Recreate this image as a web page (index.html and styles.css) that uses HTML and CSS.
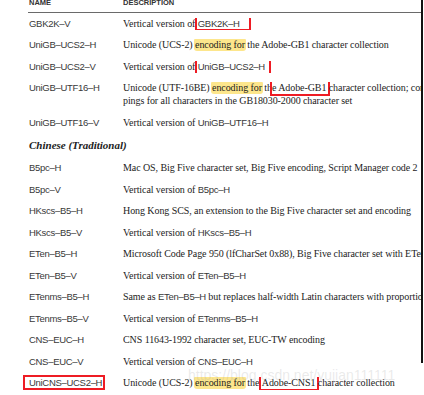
FILE: index.html
```html
<!DOCTYPE html>
<html>
<head>
<meta charset="utf-8">
<link rel="stylesheet" href="styles.css">
</head>
<body>
<div class="page">
  <div class="sheet">
    <div class="head"><span class="h-name">NAME</span><span class="h-desc">DESCRIPTION</span></div>
    <div class="row"><div class="name">GBK2K–V</div><div class="desc">Vertical version of <span class="ref box b1">GBK2K–H</span></div></div>
    <div class="row"><div class="name">UniGB–UCS2–H</div><div class="desc">Unicode (UCS-2) <span class="hl">encoding for</span> the Adobe-GB1 character collection</div></div>
    <div class="row"><div class="name">UniGB–UCS2–V</div><div class="desc">Vertical version of <span class="ref box b2">UniGB–UCS2–H</span></div></div>
    <div class="row two"><div class="name">UniGB–UTF16–H</div><div class="desc">Unicode (UTF-16BE) <span class="hl">encoding for</span> th<span class="box b3">e Adobe-GB1</span> character collection; contains map-<br>pings for all characters in the GB18030-2000 character set</div></div>
    <div class="row"><div class="name">UniGB–UTF16–V</div><div class="desc">Vertical version of <span class="ref">UniGB–UTF16–H</span></div></div>
    <div class="heading">Chinese (Traditional)</div>
    <div class="row"><div class="name">B5pc–H</div><div class="desc">Mac OS, Big Five character set, Big Five encoding, Script Manager code 2</div></div>
    <div class="row"><div class="name">B5pc–V</div><div class="desc">Vertical version of <span class="ref">B5pc–H</span></div></div>
    <div class="row"><div class="name">HKscs–B5–H</div><div class="desc">Hong Kong SCS, an extension to the Big Five character set and encoding</div></div>
    <div class="row"><div class="name">HKscs–B5–V</div><div class="desc">Vertical version of <span class="ref">HKscs–B5–H</span></div></div>
    <div class="row"><div class="name">ETen–B5–H</div><div class="desc">Microsoft Code Page 950 (lfCharSet 0x88), Big Five character set with ETen extensions</div></div>
    <div class="row"><div class="name">ETen–B5–V</div><div class="desc">Vertical version of <span class="ref">ETen–B5–H</span></div></div>
    <div class="row"><div class="name">ETenms–B5–H</div><div class="desc">Same as <span class="ref">ETen–B5–H</span> but replaces half-width Latin characters with proportional forms</div></div>
    <div class="row"><div class="name">ETenms–B5–V</div><div class="desc">Vertical version of <span class="ref">ETenms–B5–H</span></div></div>
    <div class="row"><div class="name">CNS–EUC–H</div><div class="desc">CNS 11643-1992 character set, EUC-TW encoding</div></div>
    <div class="row"><div class="name">CNS–EUC–V</div><div class="desc">Vertical version of <span class="ref">CNS–EUC–H</span></div></div>
    <div class="row"><div class="name"><span class="box b4">UniCNS–UCS2–H</span></div><div class="desc">Unicode (UCS-2) <span class="hl">encoding for</span> the <span class="box b5">Adobe-CNS1</span> character collection</div></div>
  </div>
  <div class="edge"></div>
  <div class="watermark">https://blog.csdn.net/yujian111111</div>
</div>
</body>
</html>
```
FILE: styles.css
```css
html, body {
  margin: 0;
  padding: 0;
  background: #ffffff;
}
.page {
  position: relative;
  width: 424px;
  height: 395px;
  overflow: hidden;
}
.sheet {
  width: 421px;
  padding-left: 29px;
  box-sizing: border-box;
}
.head {
  display: flex;
  align-items: flex-start;
  height: 13px;
  margin-left: -1px;
  padding-left: 1px;
  box-sizing: border-box;
  border-bottom: 1px solid #6a6a6a;
  font-family: "Liberation Sans", Arial, sans-serif;
  font-weight: bold;
  font-size: 7.5px;
  line-height: 8px;
  color: #333;
}
.head span { margin-top: -1.5px; }
.h-name { width: 94px; }
.row {
  display: grid;
  grid-template-columns: 94px 298px;
  padding: 4.5px 0;
  line-height: 12.5px;
}
.row.two { padding-bottom: 5.5px; }
.name, .ref {
  font-family: "Liberation Sans", Arial, sans-serif;
  font-size: 9.5px;
  letter-spacing: -0.3px;
  color: #383838;
}
.desc {
  font-family: "Liberation Serif", "Times New Roman", serif;
  font-size: 10px;
  letter-spacing: -0.08px;
  color: #1c1c1c;
  white-space: nowrap;
  overflow: hidden;
}
.heading {
  height: 23.5px;
  line-height: 23.5px;
  font-family: "Liberation Serif", "Times New Roman", serif;
  font-weight: bold;
  font-style: italic;
  font-size: 11px;
  color: #222;
}
.hl {
  background: #fde68c;
  border-radius: 3px;
  padding: 1px 1px;
  margin: 0 -1px;
}
.box {
  box-shadow: inset 0 0 0 2px #ee1c24;
}
.b1 { padding: 2px 11px 2px 3px; margin-left: -3px; }
.b2 { padding: 4px 6px 4px 3px; margin-left: -3px; }
.b3 { padding: 3px 4px 3px 2px; margin-left: -2px; margin-right: -4px; }
.b4 { padding: 2px 3px 2px 6px; margin-left: -6px; margin-right: -3px; }
.b5 { padding: 4px 4px 3px 3px; margin-left: -3px; margin-right: -4px; }
.edge {
  position: absolute;
  left: 421px;
  top: 0;
  width: 2px;
  height: 363px;
  background: #111;
}
.watermark {
  position: absolute;
  left: 188px;
  top: 367px;
  font-family: "Liberation Sans", Arial, sans-serif;
  font-size: 14px;
  color: rgba(170, 170, 170, 0.25);
  white-space: nowrap;
}
```
